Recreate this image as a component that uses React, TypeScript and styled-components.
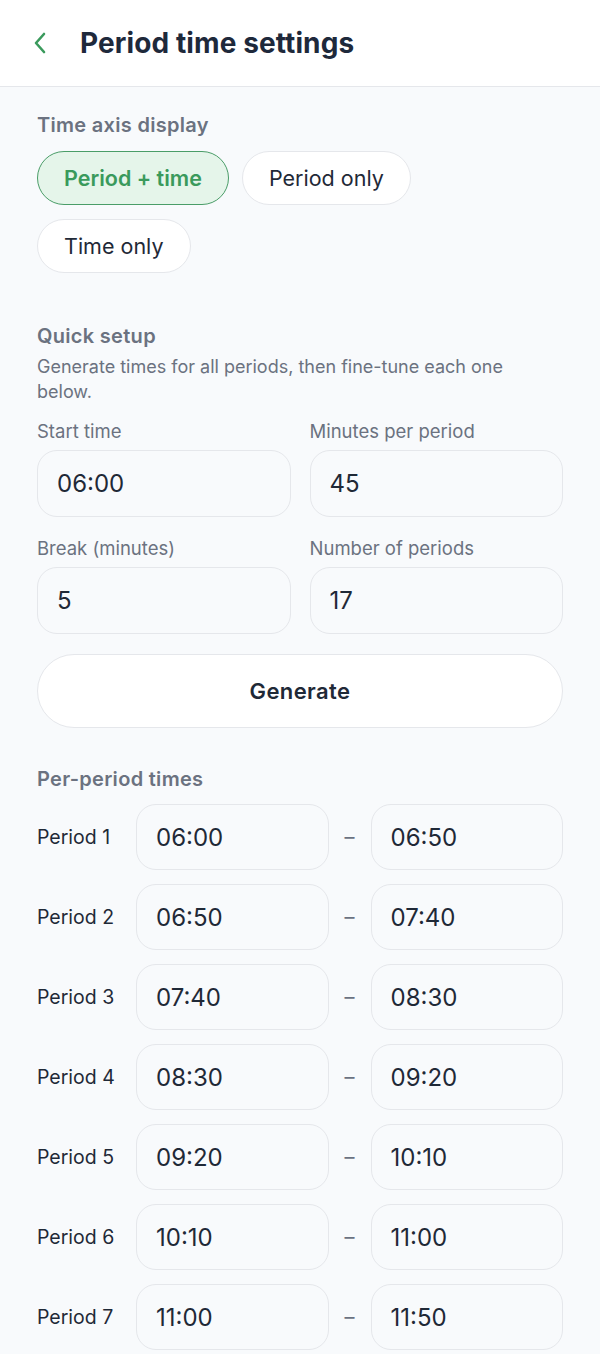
import React from "react";
import styled, { createGlobalStyle } from "styled-components";

const GlobalStyle = createGlobalStyle`
    html, body {
        margin: 0;
        padding: 0;
        background-color: #f8fafc;
        font-family: Inter, "Noto Sans", sans-serif;
        color: #1f2937;
    }
`;

const Page = styled.div`
    min-height: 100vh;
    display: flex;
    flex-direction: column;
    background-color: #f8fafc;
`;

const Header = styled.header`
    height: 87px;
    display: flex;
    align-items: center;
    gap: 30px;
    padding: 0 30px;
    background-color: #fff;
    border-bottom: 1px solid #e5e7eb;
    box-sizing: border-box;
`;

const BackButton = styled.button`
    width: 20px;
    height: 30px;
    padding: 0;
    border: none;
    background: none;
    display: flex;
    align-items: center;
    justify-content: center;
    cursor: pointer;
`;

const Title = styled.h1`
    margin: 0;
    font-size: 28px;
    font-weight: 700;
    color: #1e293b;
    letter-spacing: 0.1px;
`;

const Content = styled.main`
    display: flex;
    flex-direction: column;
    padding: 26px 37px 0 37px;
`;

const Section = styled.section<{ $gap?: number }>`
    display: flex;
    flex-direction: column;
    margin-bottom: ${props => props.$gap ?? 0}px;
`;

const SectionTitle = styled.h2`
    margin: 0;
    font-size: 20px;
    font-weight: 600;
    color: #6b7280;
    line-height: 24px;
    letter-spacing: 0.3px;
`;

const Hint = styled.p`
    margin: 6px 0 0 0;
    max-width: 500px;
    font-size: 18px;
    line-height: 25px;
    color: #6b7280;
`;

const ChipRow = styled.div`
    display: flex;
    flex-wrap: wrap;
    gap: 14px 13px;
    margin-top: 14px;
    max-width: 420px;
`;

const Chip = styled.button<{ $active?: boolean }>`
    height: 54px;
    padding: 0 26px;
    border-radius: 999px;
    font-family: inherit;
    font-size: 21.5px;
    font-weight: ${props => (props.$active ? 600 : 400)};
    color: ${props => (props.$active ? "#3a9a5c" : "#1f2937")};
    background-color: ${props => (props.$active ? "#e5f5ea" : "#fff")};
    border: ${props => (props.$active ? "1.5px solid #4a9d68" : "1.5px solid #e5e7eb")};
    cursor: pointer;
`;

const FieldGrid = styled.div`
    display: grid;
    grid-template-columns: 1fr 1fr;
    gap: 20px 19px;
    margin-top: 16px;
`;

const Field = styled.label`
    display: flex;
    flex-direction: column;
    gap: 8px;
`;

const FieldLabel = styled.span`
    font-size: 18.5px;
    line-height: 22px;
    color: #6b7280;
`;

const Input = styled.input<{ $height?: number }>`
    height: ${props => props.$height ?? 67}px;
    box-sizing: border-box;
    width: 100%;
    min-width: 0;
    padding: 0 19px;
    border: 1.5px solid #e5e7eb;
    border-radius: 20px;
    background-color: #f8fafc;
    font-family: inherit;
    font-size: 24px;
    color: #1f2937;
    outline: none;
`;

const GenerateButton = styled.button`
    margin-top: 20px;
    height: 74px;
    width: 100%;
    border-radius: 999px;
    border: 1.5px solid #e5e7eb;
    background-color: #fff;
    font-family: inherit;
    font-size: 22px;
    font-weight: 600;
    letter-spacing: 0.4px;
    color: #1f2937;
    cursor: pointer;
`;

const PeriodList = styled.div`
    display: flex;
    flex-direction: column;
    gap: 14px;
    margin-top: 13px;
`;

const PeriodRow = styled.div`
    display: grid;
    grid-template-columns: 99px 1fr 42px 1fr;
    align-items: center;
`;

const PeriodLabel = styled.span`
    font-size: 19.5px;
    color: #1f2937;
    white-space: nowrap;
`;

const Dash = styled.span`
    text-align: center;
    font-size: 20px;
    color: #6b7280;
`;

const ChevronLeft = () => (
    <svg width="16" height="24" viewBox="0 0 16 24" fill="none">
        <path d="M12 3 L4 12 L12 21" stroke="#3a9a5c" strokeWidth="2.6" strokeLinecap="round" strokeLinejoin="round" />
    </svg>
);

const periods = [
    ["06:00", "06:50"],
    ["06:50", "07:40"],
    ["07:40", "08:30"],
    ["08:30", "09:20"],
    ["09:20", "10:10"],
    ["10:10", "11:00"],
    ["11:00", "11:50"],
];

export default function App() {
    return (
        <Page>
            <GlobalStyle />
            <Header>
                <BackButton aria-label="Back">
                    <ChevronLeft />
                </BackButton>
                <Title>Period time settings</Title>
            </Header>
            <Content>
                <Section $gap={51}>
                    <SectionTitle>Time axis display</SectionTitle>
                    <ChipRow>
                        <Chip $active>Period + time</Chip>
                        <Chip>Period only</Chip>
                        <Chip>Time only</Chip>
                    </ChipRow>
                </Section>

                <Section $gap={39}>
                    <SectionTitle>Quick setup</SectionTitle>
                    <Hint>Generate times for all periods, then fine-tune each one below.</Hint>
                    <FieldGrid>
                        <Field>
                            <FieldLabel>Start time</FieldLabel>
                            <Input defaultValue="06:00" />
                        </Field>
                        <Field>
                            <FieldLabel>Minutes per period</FieldLabel>
                            <Input defaultValue="45" />
                        </Field>
                        <Field>
                            <FieldLabel>Break (minutes)</FieldLabel>
                            <Input defaultValue="5" />
                        </Field>
                        <Field>
                            <FieldLabel>Number of periods</FieldLabel>
                            <Input defaultValue="17" />
                        </Field>
                    </FieldGrid>
                    <GenerateButton>Generate</GenerateButton>
                </Section>

                <Section>
                    <SectionTitle>Per-period times</SectionTitle>
                    <PeriodList>
                        {periods.map(([from, to], i) => (
                            <PeriodRow key={i}>
                                <PeriodLabel>Period {i + 1}</PeriodLabel>
                                <Input $height={66} defaultValue={from} />
                                <Dash>–</Dash>
                                <Input $height={66} defaultValue={to} />
                            </PeriodRow>
                        ))}
                    </PeriodList>
                </Section>
            </Content>
        </Page>
    );
}
